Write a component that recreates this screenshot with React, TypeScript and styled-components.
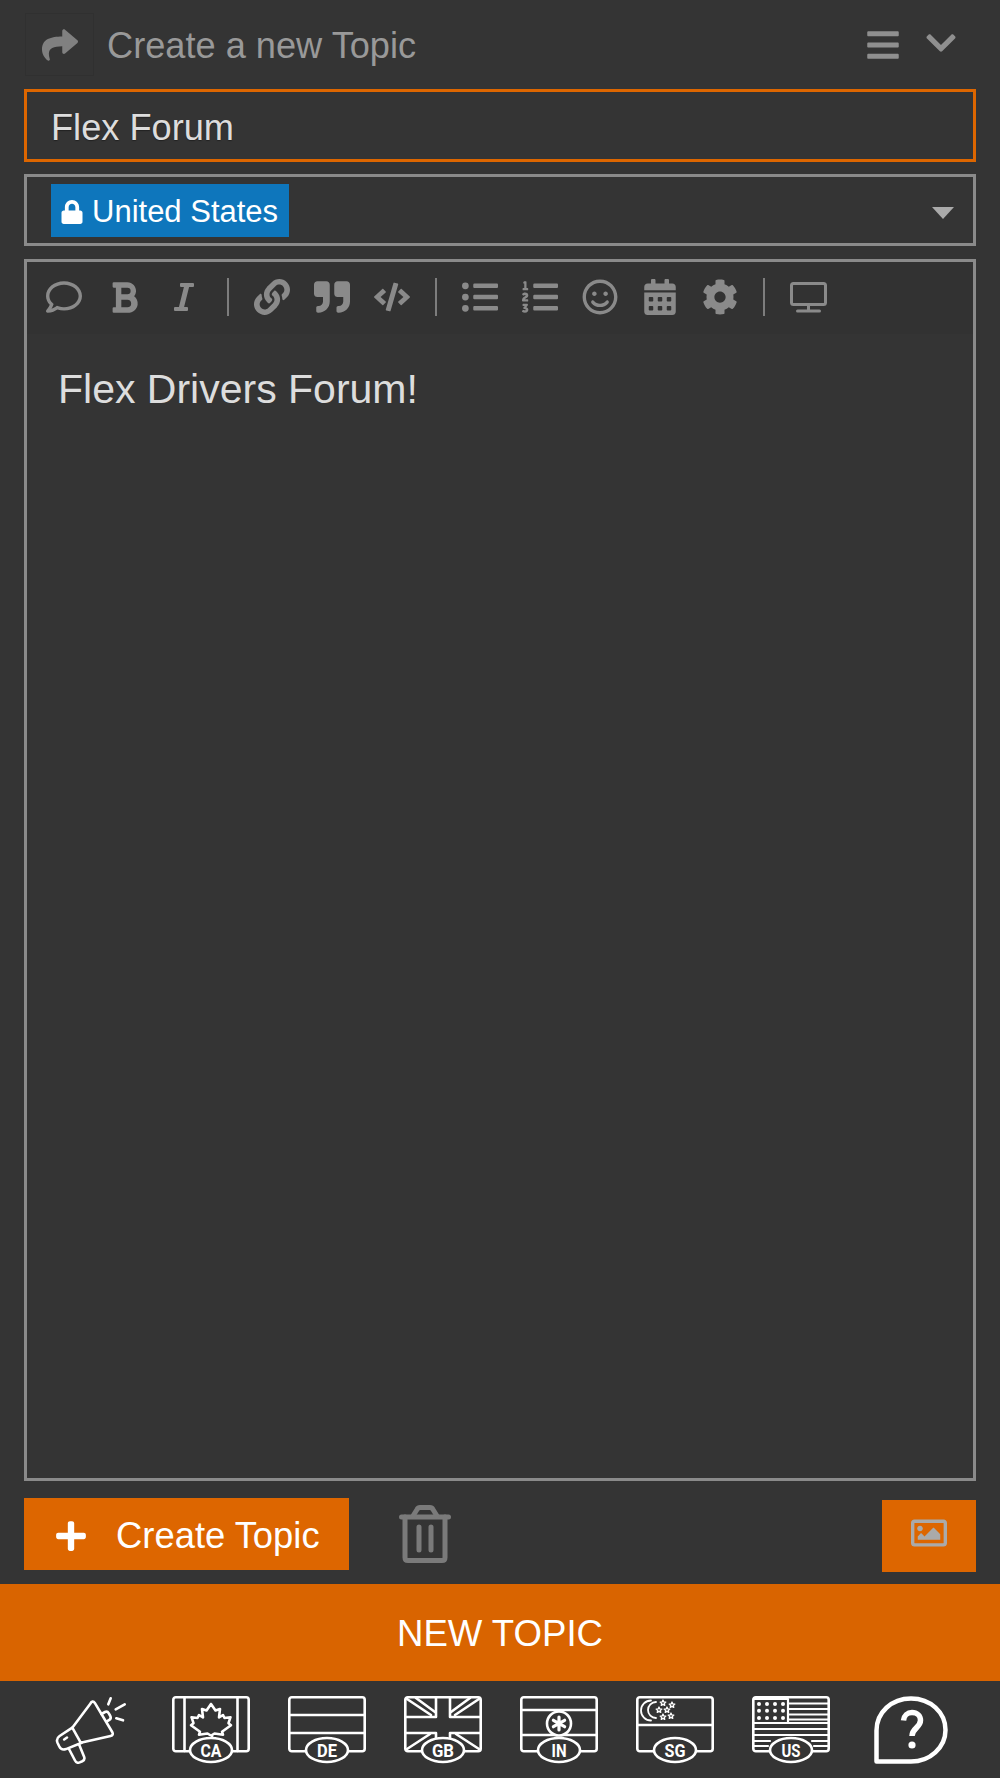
import React from 'react';
import styled, { createGlobalStyle } from 'styled-components';
import {
  FaShare,
  FaBars,
  FaChevronDown,
  FaRegComment,
  FaBold,
  FaItalic,
  FaLink,
  FaQuoteRight,
  FaCode,
  FaListUl,
  FaListOl,
  FaRegSmile,
  FaCalendarAlt,
  FaCog,
  FaLock,
  FaPlus,
  FaRegImage,
} from 'react-icons/fa';

const GlobalStyle = createGlobalStyle`
  * { box-sizing: border-box; }
  html, body { margin: 0; padding: 0; background: #343434; }
  body { font-family: "Liberation Sans", Arial, sans-serif; }
`;

const Page = styled.div`
  display: flex;
  flex-direction: column;
  width: 1000px;
  height: 1778px;
  background: #343434;
  overflow: hidden;
`;

const Composer = styled.div`
  display: flex;
  flex: 1;
  flex-direction: column;
  min-height: 0;
  padding: 13px 24px 12px;
`;

const Header = styled.div`
  display: flex;
  flex: none;
  align-items: center;
  height: 63px;
  margin-bottom: 13px;
`;

const ReplyBox = styled.div`
  display: flex;
  align-items: center;
  justify-content: center;
  width: 69px;
  height: 63px;
  margin-left: 1px;
  border: 1px solid #303030;
  color: #808080;
  font-size: 36px;
`;

const HeaderTitle = styled.div`
  flex: 1;
  margin-top: 2px;
  margin-left: 13px;
  color: #999999;
  font-size: 36.2px;
  line-height: 63px;
`;

const HeaderAction = styled.div<{ $size: number; $right: number; $top: number }>`
  display: flex;
  margin-top: ${(p) => p.$top}px;
  margin-right: ${(p) => p.$right}px;
  color: #8f8f8f;
  font-size: ${(p) => p.$size}px;
`;

const TitleInput = styled.div`
  flex: none;
  height: 73px;
  margin-bottom: 12px;
  padding-left: 24px;
  border: 3px solid #dd6600;
  color: #dddddd;
  font-size: 36.2px;
  line-height: 71px;
  text-shadow: 0 1px 1px #222222;
`;

const CategorySelect = styled.div`
  display: flex;
  flex: none;
  align-items: center;
  justify-content: space-between;
  height: 72px;
  margin-bottom: 13px;
  padding: 0 19px 0 24px;
  border: 3px solid #8a8a8a;
`;

const CategoryTag = styled.div`
  display: flex;
  align-items: center;
  gap: 8px;
  height: 53px;
  padding: 4px 11px 0 9px;
  background: #0e76bc;
  color: #ffffff;
  font-size: 31px;
`;

const Caret = styled.div`
  width: 0;
  height: 0;
  margin-top: 6px;
  border-left: 11px solid transparent;
  border-right: 11px solid transparent;
  border-top: 12px solid #aaaaaa;
`;

const Editor = styled.div`
  display: flex;
  flex: 1;
  flex-direction: column;
  min-height: 0;
  margin-bottom: 17px;
  border: 3px solid #8a8a8a;
`;

const Toolbar = styled.div`
  display: flex;
  flex: none;
  align-items: center;
  height: 72px;
  padding: 0 0 2px 7px;
  background: #323232;
  color: #8a8a8a;
`;

const ToolButton = styled.div<{ $size?: number }>`
  display: flex;
  align-items: center;
  justify-content: center;
  width: 60px;
  font-size: ${(p) => p.$size ?? 36}px;
`;

const ToolDivider = styled.div`
  width: 2px;
  height: 38px;
  margin: 0 13px;
  background: #7d7d7d;
`;

const EditorBody = styled.div`
  flex: 1;
  padding: 28px 31px;
  color: #dddddd;
  font-size: 41px;
  line-height: 54px;
`;

const ActionRow = styled.div`
  display: flex;
  flex: none;
  align-items: flex-start;
  height: 74px;
`;

const CreateButton = styled.div`
  display: flex;
  align-items: center;
  width: 325px;
  height: 72px;
  padding: 3px 0 0 30px;
  gap: 28px;
  background: #dd6600;
  color: #ffffff;
  font-size: 36.4px;
`;

const TrashButton = styled.div`
  display: flex;
  align-items: center;
  height: 72px;
  margin-left: 50px;
  color: #7a7a7a;
`;

const ImageButton = styled.div`
  display: flex;
  align-items: center;
  justify-content: center;
  width: 94px;
  height: 72px;
  margin-top: 2px;
  margin-left: auto;
  padding-bottom: 6px;
  background: #dd6600;
  color: #aaaaaa;
  font-size: 36px;
`;

const Banner = styled.div`
  flex: none;
  height: 97px;
  padding-top: 1px;
  background: #d96400;
  color: #ffffff;
  font-size: 36.6px;
  line-height: 97px;
  text-align: center;
`;

const BottomNav = styled.div`
  display: grid;
  flex: none;
  grid-template-columns: 124px repeat(6, 116px) 124px;
  align-items: center;
  height: 97px;
  padding-left: 29px;
`;

const NavItem = styled.div`
  display: flex;
  align-items: center;
  justify-content: center;
  color: #ffffff;
`;

const FlagLabel = styled.text`
  fill: #ffffff;
  font-family: Roboto, "Liberation Sans", sans-serif;
  font-size: 18px;
  font-weight: 700;
  text-anchor: middle;
`;

const labelWidths: Record<string, number> = { CA: 21, DE: 20, GB: 22, IN: 15, SG: 21, US: 19 };

const Flag: React.FC<{ code: string; children?: React.ReactNode }> = ({ code, children }) => (
  <svg width="78" height="68" viewBox="0 0 78 68" fill="none" stroke="currentColor" strokeWidth="2.6" strokeLinejoin="round" strokeLinecap="round">
    <rect x="1.3" y="1.3" width="75.4" height="54" rx="2.5" />
    {children}
    <ellipse cx="39" cy="54" rx="21" ry="12" fill="#343434" />
    <FlagLabel x="39" y="60.5" stroke="none" textLength={labelWidths[code]} lengthAdjust="spacingAndGlyphs">
      {code}
    </FlagLabel>
  </svg>
);

// five pointed outline for the singapore stars
const starPath = (cx: number, cy: number, r: number) => {
  const pts = Array.from({ length: 10 }, (_, i) => {
    const a = (Math.PI / 5) * i - Math.PI / 2;
    const d = i % 2 === 0 ? r : r * 0.45;
    return `${(cx + Math.cos(a) * d).toFixed(2)} ${(cy + Math.sin(a) * d).toFixed(2)}`;
  });
  return `M${pts.join('L')}Z`;
};

const Megaphone = () => (
  <svg width="72" height="68" viewBox="0 0 72 68" fill="none" stroke="currentColor" strokeWidth="2.6" strokeLinejoin="round" strokeLinecap="round">
    <path d="M35.500 7.500c1-2.200 3-2.600 4.300-.6L57.200 36c1.200 2 .6 3.600-1.600 4L25.700 46.700 17.300 31.700Z" />
    <path d="M17.300 31.700 4.600 40c-2.600 1.800-3.200 4.300-2 7l1.700 3.500c1.400 2.800 3.800 3.600 6.700 2.600l15.700-6.400" />
    <path d="M14 53l6 11.500c1 2 2.600 2.700 4.700 1.900l2.600-1.100c2-.9 2.500-2.600 1.800-4.600L24 48.300" />
    <path d="M46.500 18l3.500-2c1.700-.8 3 0 3.800 1.400l1.500 2.600c.8 1.500.4 2.900-1 3.900l-2 1.300" />
    <path d="M12 41.500l-2.800 2" />
    <path d="M55.700 2.300 53.300 8.300M69.700 8.300 60.700 13.300M68 24.300 61.300 22.300" />
  </svg>
);

const HelpBubble = () => (
  <svg width="74" height="68" viewBox="0 0 74 68" fill="none" stroke="currentColor" strokeLinecap="round">
    <path d="M2.500 65.500V34.500C2.500 16.500 17.500 2.500 37 2.500S71.500 16.500 71.500 34S56 65.500 37 65.500Z" strokeWidth="4.500" strokeLinejoin="round" />
    <path d="M29.500 24.500c.4-4.800 4-8 8.500-8 5 0 8.500 3.300 8.500 7.800 0 7.500-8.500 7.700-8.500 15.700" strokeWidth="5.500" strokeLinecap="butt" />
    <circle cx="38" cy="49" r="3.600" fill="currentColor" stroke="none" />
  </svg>
);

const DesktopIcon = () => (
  <svg width="37" height="31" viewBox="0 0 37 31" fill="none" stroke="currentColor" strokeLinecap="round" strokeLinejoin="round">
    <rect x="1.500" y="1.500" width="34" height="21" rx="2" strokeWidth="3" />
    <path d="M18.500 23v5M7.500 29h22" strokeWidth="3" />
  </svg>
);

const TrashIcon = () => (
  <svg width="52" height="58" viewBox="0 0 52 58" fill="none" stroke="currentColor" strokeWidth="5" strokeLinecap="round" strokeLinejoin="round">
    <path d="M2.500 12h47" />
    <path d="M6 12v40.500c0 2 1 3 3 3h34c2 0 3-1 3-3V12" />
    <path d="M14 11l4-6.500c.7-1.300 1.700-2 3-2h10c1.300 0 2.300.7 3 2l4 6.500" />
    <path d="M20 22v23M32 22v23" />
  </svg>
);

const App: React.FC = () => (
  <React.Fragment>
    <GlobalStyle />
    <Page>
      <Composer>
        <Header>
          <ReplyBox>
            <FaShare />
          </ReplyBox>
          <HeaderTitle>Create a new Topic</HeaderTitle>
          <HeaderAction $size={36} $right={23} $top={1}>
            <FaBars />
          </HeaderAction>
          <HeaderAction $size={34} $right={18} $top={-3}>
            <FaChevronDown />
          </HeaderAction>
        </Header>
        <TitleInput>Flex Forum</TitleInput>
        <CategorySelect>
          <CategoryTag>
            <FaLock size={24} />
            United States
          </CategoryTag>
          <Caret />
        </CategorySelect>
        <Editor>
          <Toolbar>
            <ToolButton>
              <FaRegComment />
            </ToolButton>
            <ToolButton $size={35}>
              <FaBold />
            </ToolButton>
            <ToolButton $size={32}>
              <FaItalic />
            </ToolButton>
            <ToolDivider />
            <ToolButton>
              <FaLink />
            </ToolButton>
            <ToolButton>
              <FaQuoteRight />
            </ToolButton>
            <ToolButton>
              <FaCode />
            </ToolButton>
            <ToolDivider />
            <ToolButton>
              <FaListUl />
            </ToolButton>
            <ToolButton>
              <FaListOl />
            </ToolButton>
            <ToolButton>
              <FaRegSmile />
            </ToolButton>
            <ToolButton>
              <FaCalendarAlt />
            </ToolButton>
            <ToolButton>
              <FaCog />
            </ToolButton>
            <ToolDivider />
            <ToolButton>
              <DesktopIcon />
            </ToolButton>
          </Toolbar>
          <EditorBody>Flex Drivers Forum!</EditorBody>
        </Editor>
        <ActionRow>
          <CreateButton>
            <FaPlus size={34} />
            Create Topic
          </CreateButton>
          <TrashButton>
            <TrashIcon />
          </TrashButton>
          <ImageButton>
            <FaRegImage />
          </ImageButton>
        </ActionRow>
      </Composer>
      <Banner>NEW TOPIC</Banner>
      <BottomNav>
        <NavItem>
          <Megaphone />
        </NavItem>
        <NavItem>
          <Flag code="CA">
            <path d="M12.500 1.500V55M65.500 1.500V55" />
            <path d="M39 8l4.500 6.500 4.500-1.500-1 8.500 4-2.500 1.500 3 6-.8-2 6 2.500 2-9 6.500 1 3-8.500-1.200-2.500 1.500v6.500M39 8l-4.500 6.500-4.500-1.500 1 8.500-4-2.500-1.500 3-6-.8 2 6-2.500 2 9 6.500-1 3 8.500-1.200 2.500 1.500" />
          </Flag>
        </NavItem>
        <NavItem>
          <Flag code="DE">
            <path d="M1.500 19H76.500M1.500 37H76.500" />
          </Flag>
        </NavItem>
        <NavItem>
          <Flag code="GB">
            <path d="M32 1.500V21H1.500M46 1.500V21H76.500M1.500 37H32V43M76.500 37H46V43" />
            <path d="M3 3 27 19M75 3 51 19M3 53 26 38M75 53 52 38M12 2 31 16M66 2 47 16" />
          </Flag>
        </NavItem>
        <NavItem>
          <Flag code="IN">
            <path d="M1.500 14H76.500M1.500 39H76.500" />
            <circle cx="39" cy="27.500" r="12" fill="#343434" />
            <path d="M39 21v13M33.400 24.300l11.200 6.400M33.400 30.700l11.200-6.400" strokeWidth="3.200" />
          </Flag>
        </NavItem>
        <NavItem>
          <Flag code="SG">
            <path d="M1.500 29H76.500" />
            <path d="M15 4.500a10 10 0 1 0 0 20 8 8 0 0 1 0-20Z" strokeWidth="1.800" />
            <path d="M20 6a8 8 0 1 0 0 16" strokeWidth="1.800" />
            <path d={[[27, 7], [36, 9], [23, 14], [31, 14], [27, 21], [35, 20]].map(([x, y]) => starPath(x, y, 3)).join('')} strokeWidth="1.300" />
          </Flag>
        </NavItem>
        <NavItem>
          <Flag code="US">
            <path d="M2 3H36V27H2M36 7.500H76M36 13H76M36 18.500H76M36 23.500H76M1.500 27H76.500M1.500 33H76.500M1.500 39H76.500M1.500 45H18M60 45H76.500M1.500 50H16M62 50H76.500" strokeWidth="2.200" />
            <g fill="currentColor" stroke="none">
              {[8, 14.7, 22].map((y) =>
                [7, 15, 23, 31].map((x) => <circle key={`${x}-${y}`} cx={x} cy={y} r="2" />),
              )}
            </g>
          </Flag>
        </NavItem>
        <NavItem>
          <HelpBubble />
        </NavItem>
      </BottomNav>
    </Page>
  </React.Fragment>
);

export default App;
